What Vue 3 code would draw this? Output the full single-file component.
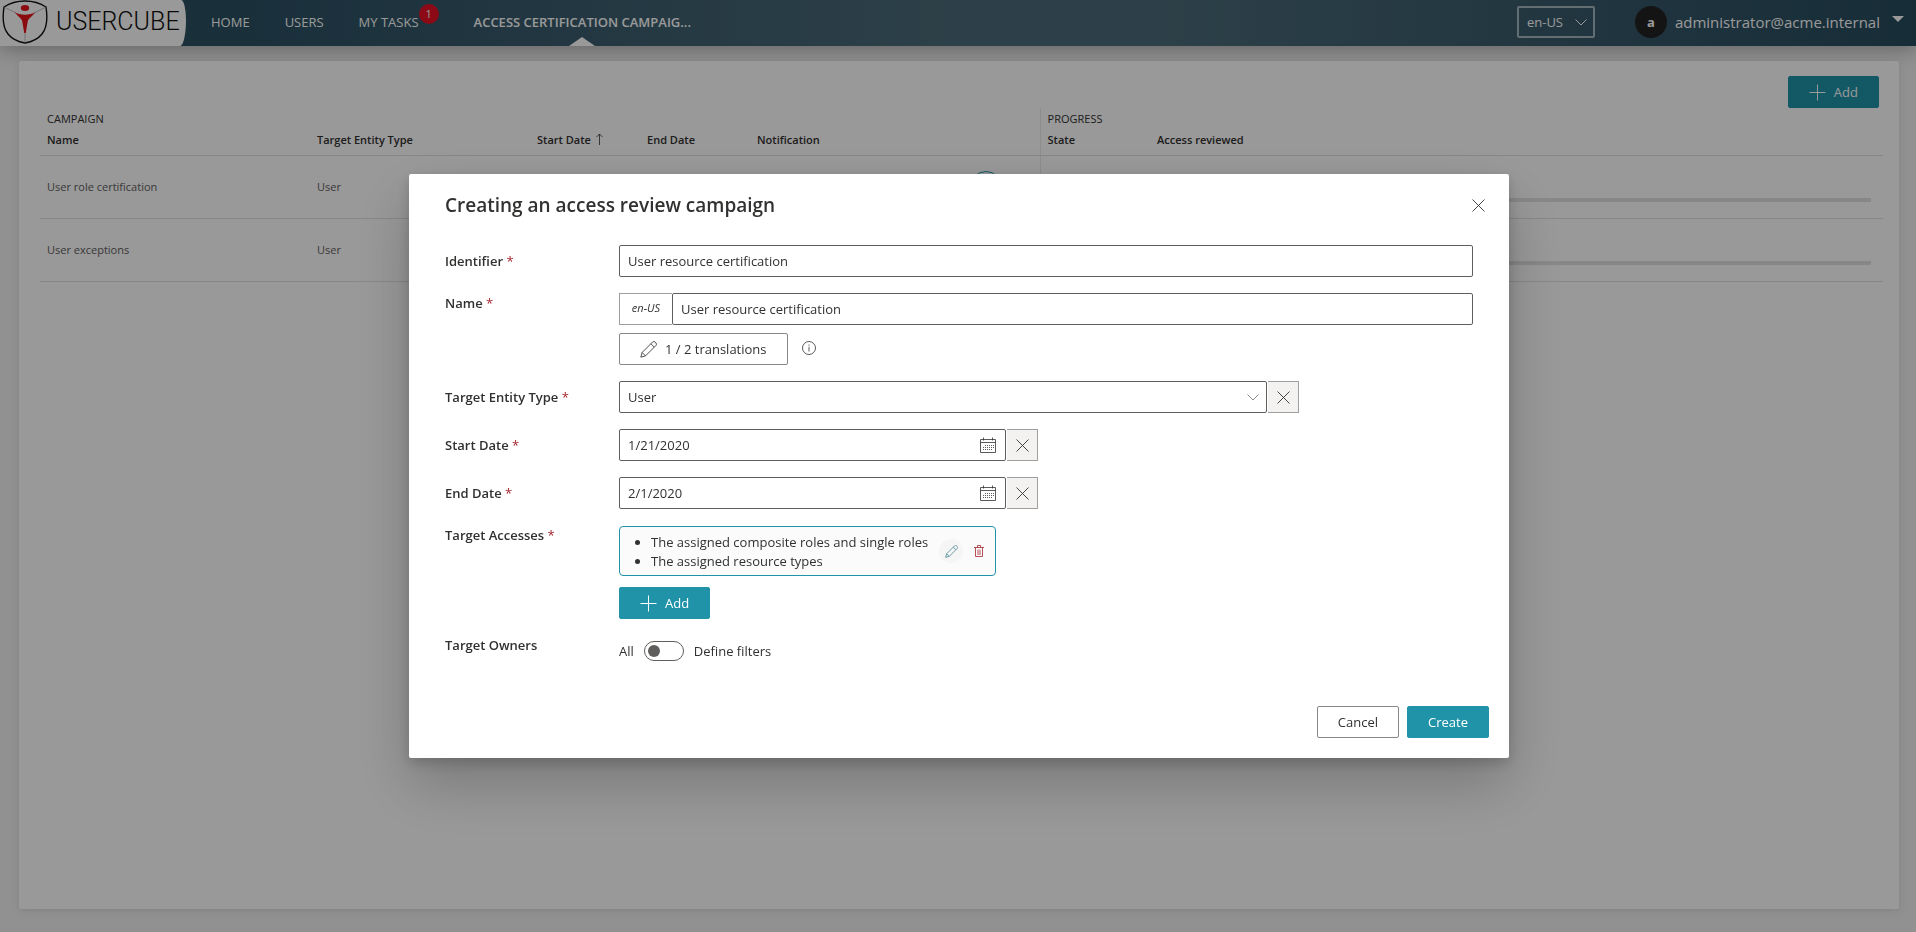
<template>
  <div class="page">
    <header class="topbar">
      <a href="#" class="logo">
        <svg width="46" height="44" viewBox="0 0 46 44">
          <path
            d="M23 1C16 1 8 3 2 7C0 20 2 29 6 34C10 39 17 42 23 43C29 42 36 39 40 34C44 29 46 20 44 7C38 3 30 1 23 1Z"
            stroke="#111"
            stroke-width="1.400"
          />
          <path d="M23 20V43M14 13L2 7M32 13L44 7" stroke="#999" stroke-width=".6" />
          <ellipse cx="23" cy="8" rx="4.200" ry="3" fill="#e8121c" stroke="none" />
          <path
            d="M12.500 12C18 15.500 28 15.500 33.500 12C30 16.500 26.500 18.500 25.800 21L23.800 33H22.200L20.200 21C19.500 18.500 16 16.500 12.500 12Z"
            fill="#e8121c"
            stroke="none"
          />
        </svg>
        <span>USERCUBE</span>
      </a>
      <nav class="nav">
        <a
          v-for="item in navItems"
          :key="item.label"
          href="#"
          :class="{ active: item.active }"
        >
          {{ item.label }}
          <span v-if="item.count" class="count">{{ item.count }}</span>
        </a>
      </nav>
      <div class="lang">
        <select v-model="lang" aria-label="Language">
          <option>en-US</option>
          <option>fr-FR</option>
        </select>
        <svg class="chevron" width="12" height="7" viewBox="0 0 12 7">
          <path d="M.5 .5L6 6L11.500 .5" />
        </svg>
      </div>
      <button type="button" class="account">
        <span class="avatar">a</span>
        <span>administrator@acme.internal</span>
        <span class="caret"></span>
      </button>
    </header>

    <main class="card">
      <div class="toolbar">
        <button type="button" class="btn primary">
          <svg width="17" height="17" viewBox="0 0 17 17">
            <path d="M8.500 .5V16.500M.5 8.500H16.500" />
          </svg>
          Add
        </button>
      </div>
      <table class="grid">
        <colgroup>
          <col class="col-name" />
          <col class="col-type" />
          <col class="col-short" />
          <col class="col-short" />
          <col class="col-notif" />
          <col class="col-short" />
          <col />
        </colgroup>
        <thead>
          <tr class="groups">
            <th colspan="5">CAMPAIGN</th>
            <th colspan="2" class="split">PROGRESS</th>
          </tr>
          <tr class="heads">
            <th>Name</th>
            <th>Target Entity Type</th>
            <th>
              Start Date
              <svg class="sort" width="7" height="12" viewBox="0 0 7 12">
                <path d="M3.500 12V1M.5 4L3.500 1L6.500 4" />
              </svg>
            </th>
            <th>End Date</th>
            <th>Notification</th>
            <th class="split">State</th>
            <th>Access reviewed</th>
          </tr>
        </thead>
        <tbody>
          <tr v-for="row in campaigns" :key="row.name">
            <td>{{ row.name }}</td>
            <td>{{ row.type }}</td>
            <td></td>
            <td></td>
            <td class="notif">
              <button v-if="row.notify" type="button" class="round" aria-label="Notify"></button>
            </td>
            <td class="split"></td>
            <td class="reviewed"><div class="bar"></div></td>
          </tr>
        </tbody>
      </table>
    </main>

    <div class="overlay">
      <form class="modal" role="dialog" aria-labelledby="modal-title" @submit.prevent>
        <div class="modal-head">
          <h2 id="modal-title">Creating an access review campaign</h2>
          <button type="button" class="close" aria-label="Close">
            <svg width="13" height="13" viewBox="0 0 13 13">
              <path d="M.5 .5L12.500 12.500M12.500 .5L.5 12.500" />
            </svg>
          </button>
        </div>

        <div class="fields">
          <div class="row">
            <label for="identifier">Identifier <span class="star">*</span></label>
            <input id="identifier" v-model="form.identifier" class="box" type="text" />
          </div>

          <div class="row top">
            <label for="name">Name <span class="star">*</span></label>
            <div class="stack">
              <div class="group">
                <span class="locale">en-US</span>
                <input id="name" v-model="form.name" class="box" type="text" />
              </div>
              <div class="group">
                <button type="button" class="btn">
                  <svg class="thin" width="17" height="17" viewBox="0 0 16 16">
                    <path
                      d="M.8 15.200L2 10.800L11.800 1A1.700 1.700 0 0 1 14.200 1L15 1.800A1.700 1.700 0 0 1 15 4.200L5.200 14ZM2 10.800L5.200 14M10.200 2.600L13.400 5.800"
                    />
                  </svg>
                  1 / 2 translations
                </button>
                <svg class="info thin" width="14" height="14" viewBox="0 0 14 14">
                  <circle cx="7" cy="7" r="6.500" />
                  <path d="M7 5.800V10.500M7 3.500V4.700" />
                </svg>
              </div>
            </div>
          </div>

          <div class="row">
            <label for="entity-type">Target Entity Type <span class="star">*</span></label>
            <div class="group">
              <div class="select">
                <select id="entity-type" v-model="form.entityType" class="box">
                  <option>User</option>
                </select>
                <svg class="chevron" width="12" height="7" viewBox="0 0 12 7">
                  <path d="M.5 .5L6 6L11.500 .5" />
                </svg>
              </div>
              <button type="button" class="clear" aria-label="Clear">
                <svg width="13" height="13" viewBox="0 0 13 13">
                  <path d="M.5 .5L12.500 12.500M12.500 .5L.5 12.500" />
                </svg>
              </button>
            </div>
          </div>

          <div v-for="date in dates" :key="date.id" class="row">
            <label :for="date.id">{{ date.label }} <span class="star">*</span></label>
            <div class="group">
              <div class="date">
                <input :id="date.id" v-model="date.value" class="box" type="text" />
                <button type="button" class="calendar" aria-label="Open calendar">
                  <svg class="thin" width="16" height="16" viewBox="0 0 16 16">
                    <path d="M.5 2.500H15.500V15.500H.5ZM.5 5.500H15.500M3.500 .5V3.500M12.500 .5V3.500" />
                    <path class="dots" d="M5 8.500H14M3 10.500H14M3 12.500H12" />
                  </svg>
                </button>
              </div>
              <button type="button" class="clear" aria-label="Clear">
                <svg width="13" height="13" viewBox="0 0 13 13">
                  <path d="M.5 .5L12.500 12.500M12.500 .5L.5 12.500" />
                </svg>
              </button>
            </div>
          </div>

          <div class="row top">
            <span class="label">Target Accesses <span class="star">*</span></span>
            <div class="accesses">
              <div class="access">
                <ul>
                  <li v-for="access in accesses" :key="access">{{ access }}</li>
                </ul>
                <button type="button" class="icon-btn edit" aria-label="Edit">
                  <svg width="13" height="13" viewBox="0 0 16 16">
                    <path
                      d="M.8 15.200L2 10.800L11.800 1A1.700 1.700 0 0 1 14.200 1L15 1.800A1.700 1.700 0 0 1 15 4.200L5.200 14ZM2 10.800L5.200 14M10.200 2.600L13.400 5.800"
                    />
                  </svg>
                </button>
                <button type="button" class="icon-btn trash" aria-label="Delete">
                  <svg class="thin" width="10" height="12" viewBox="0 0 10 12">
                    <path d="M0 2.500H10M3.500 2.500V.5H6.500V2.500M1.500 2.500V11.500H8.500V2.500M4 4.500V10M6 4.500V10" />
                  </svg>
                </button>
              </div>
              <button type="button" class="btn primary">
                <svg width="17" height="17" viewBox="0 0 17 17">
                  <path d="M8.500 .5V16.500M.5 8.500H16.500" />
                </svg>
                Add
              </button>
            </div>
          </div>

          <div class="row top">
            <label for="owners">Target Owners</label>
            <div class="group owners">
              <span>All</span>
              <input id="owners" v-model="form.filterOwners" class="toggle" type="checkbox" />
              <span>Define filters</span>
            </div>
          </div>
        </div>

        <div class="modal-foot">
          <button type="button" class="btn">Cancel</button>
          <button type="submit" class="btn primary">Create</button>
        </div>
      </form>
    </div>
  </div>
</template>

<script setup>
import { ref, reactive } from "vue";

const lang = ref("en-US");

const navItems = [
  { label: "HOME" },
  { label: "USERS" },
  { label: "MY TASKS", count: 1 },
  { label: "ACCESS CERTIFICATION CAMPAIG...", active: true },
];

const campaigns = [
  { name: "User role certification", type: "User", notify: true },
  { name: "User exceptions", type: "User", notify: false },
];

const form = reactive({
  identifier: "User resource certification",
  name: "User resource certification",
  entityType: "User",
  filterOwners: false,
});

const dates = reactive([
  { id: "start-date", label: "Start Date", value: "1/21/2020" },
  { id: "end-date", label: "End Date", value: "2/1/2020" },
]);

const accesses = [
  "The assigned composite roles and single roles",
  "The assigned resource types",
];
</script>

<style>
body {
  margin: 0;
}
</style>

<style scoped>
.page,
.page * {
  box-sizing: border-box;
}

.page {
  min-height: 100vh;
  display: flex;
  flex-direction: column;
  background: #f2f2f2;
  color: #323130;
  font-family: "Open Sans", "Noto Sans", sans-serif;
  font-size: 13px;
  line-height: 20px;
}

button,
input,
select {
  font: inherit;
  color: inherit;
}

button {
  padding: 0;
  border: 0;
  background: none;
}

svg {
  flex: none;
  fill: none;
  stroke: currentColor;
}

.thin {
  stroke-width: 0.8;
}

.topbar {
  display: flex;
  align-items: center;
  height: 46px;
  padding: 0 12px 2px 0;
  background: linear-gradient(90deg, #2a4f62 12%, #4c6c7a 50%, #4c6c7a 60%, #264b5d 100%);
  box-shadow: 0 4px 20px rgba(0, 0, 0, 0.3);
  color: #fff;
}

.topbar a {
  color: #fff;
  text-decoration: none;
}

.topbar .logo {
  display: flex;
  align-items: center;
  align-self: flex-start;
  gap: 8px;
  width: 186px;
  height: 46px;
  padding: 0 0 2px 2px;
  background: #fff;
  border-radius: 0 5px 6px 0 / 0 20px 26px 0;
  color: #111;
  font-family: Roboto, sans-serif;
  font-size: 25px;
  font-weight: 300;
}

.nav {
  display: flex;
  flex: 1;
  align-self: flex-start;
  gap: 35px;
  padding-left: 25px;
}

.nav a {
  position: relative;
  height: 46px;
  line-height: 44px;
}

.nav .active {
  margin-left: 20px;
  font-weight: 600;
}

.nav .active::after {
  content: "";
  position: absolute;
  left: 50%;
  bottom: 0;
  margin-left: -13px;
  border: 13px solid transparent;
  border-top: 0;
  border-bottom: 9px solid #fff;
}

.count {
  position: absolute;
  top: 4px;
  right: -20px;
  width: 20px;
  border-radius: 50%;
  background: #e81123;
  font-size: 11px;
  line-height: 20px;
  text-align: center;
}

.lang {
  position: relative;
  margin-right: 40px;
}

.lang select {
  display: block;
  width: 78px;
  height: 32px;
  padding: 0 8px;
  border: 2px solid #a6b7be;
  border-radius: 2px;
  background: transparent;
  appearance: none;
}

.chevron {
  position: absolute;
  top: 13px;
  right: 8px;
  pointer-events: none;
}

.account {
  display: flex;
  align-items: center;
  gap: 8px;
  font-size: 15px;
}

.avatar {
  width: 32px;
  border-radius: 50%;
  background: #222;
  font-size: 13px;
  font-weight: 700;
  line-height: 32px;
}

.caret {
  margin: 0 0 6px 4px;
  border: 6px solid transparent;
  border-top-color: #fff;
  border-bottom: 0;
}

.card {
  flex: 1;
  margin: 15px 17px 23px 19px;
  padding: 15px 16px 15px 21px;
  border-radius: 2px;
  background: #fff;
  box-shadow: 0 2px 10px rgba(0, 0, 0, 0.1);
}

.toolbar {
  display: flex;
  justify-content: flex-end;
  padding-right: 4px;
}

.btn {
  display: inline-flex;
  align-items: center;
  gap: 8px;
  height: 32px;
  padding: 0 20px;
  border: 1px solid #8a8886;
  border-radius: 2px;
  background: #fff;
}

.btn.primary {
  border-color: #2093a9;
  background: #2093a9;
  color: #fff;
}

.grid {
  width: 100%;
  border-collapse: collapse;
  table-layout: fixed;
  font-size: 11px;
}

.col-name {
  width: 270px;
}

.col-type {
  width: 220px;
}

.col-short {
  width: 110px;
}

.col-notif {
  width: 290px;
}

.grid th,
.grid td {
  padding: 0 7px;
  text-align: left;
  font-weight: 400;
}

.grid .split {
  border-left: 1px solid #edebe9;
}

.groups th {
  height: 21px;
  line-height: 20px;
}

.heads th {
  height: 26px;
  border-bottom: 1px solid #e1dfdd;
}

.grid .heads th {
  padding-bottom: 4px;
  font-weight: 600;
}

.sort {
  margin-left: 2px;
  stroke-width: 0.8;
  vertical-align: -1px;
}

.grid td {
  height: 63px;
  border-bottom: 1px solid #e4e2e0;
  color: #605e5c;
}

.grid .notif {
  padding-right: 38px;
  text-align: right;
}

.round {
  display: inline-block;
  width: 32px;
  height: 32px;
  border: 1px solid #2093a9;
  border-radius: 50%;
  vertical-align: middle;
}

.grid .reviewed {
  padding: 27px 12px 0 7px;
}

.bar {
  height: 4px;
  background: #e4e2e0;
}

.overlay {
  position: fixed;
  inset: 0;
  display: flex;
  align-items: center;
  justify-content: center;
  padding-left: 2px;
  background: rgba(0, 0, 0, 0.4);
}

.modal {
  width: 1100px;
  max-width: 100%;
  padding: 20px;
  border-radius: 2px;
  background: #fff;
  box-shadow: 0 26px 58px rgba(0, 0, 0, 0.22), 0 5px 14px rgba(0, 0, 0, 0.18);
}

.modal-head {
  display: flex;
  align-items: center;
  justify-content: space-between;
  height: 22px;
  padding: 0 4px 0 16px;
}

h2 {
  margin: 0;
  font-size: 19px;
  font-weight: 600;
}

.close {
  display: flex;
}

.fields {
  display: flex;
  flex-direction: column;
  gap: 16px;
  padding: 29px 16px 39px;
}

.row {
  display: flex;
  align-items: center;
}

.row.top {
  align-items: flex-start;
}

.row > label,
.label {
  flex: none;
  width: 174px;
  font-weight: 600;
}

.star {
  color: #a4262c;
  font-weight: 400;
}

.box {
  display: block;
  width: 100%;
  height: 32px;
  padding: 0 8px;
  border: 1px solid #605e5c;
  border-radius: 2px;
  background: #fff;
  appearance: none;
}

.stack {
  display: flex;
  flex: 1;
  flex-direction: column;
  gap: 8px;
}

.group {
  display: flex;
}

.locale {
  flex: none;
  width: 53px;
  border: 1px solid #a19f9d;
  border-right: 0;
  font-size: 11px;
  font-style: italic;
  line-height: 28px;
  text-align: center;
}

.info {
  margin: 8px 0 0 14px;
}

.select {
  position: relative;
  width: 648px;
}

.select .chevron {
  color: #8a8886;
}

.date {
  position: relative;
  width: 387px;
}

.calendar {
  position: absolute;
  top: 8px;
  right: 10px;
  display: flex;
}

.dots {
  stroke-dasharray: 1 1;
}

.clear {
  display: flex;
  align-items: center;
  justify-content: center;
  width: 31px;
  margin-left: 1px;
  border: 1px solid #a19f9d;
  border-left: 0;
  background: #f3f2f1;
}

.clear svg,
.close svg {
  stroke-width: 0.9;
}

.accesses {
  padding-top: 1px;
}

.access {
  display: flex;
  align-items: center;
  width: 377px;
  height: 50px;
  margin-bottom: 11px;
  padding: 0 4px 0 5px;
  border: 1px solid #2093a9;
  border-radius: 4px;
  background: #fbfbfc;
}

.access ul {
  flex: 1;
  margin: 0;
  padding: 1px 0 0 26px;
  line-height: 19px;
  white-space: nowrap;
}

.icon-btn {
  display: flex;
  align-items: center;
  justify-content: center;
  width: 24px;
  height: 24px;
  border-radius: 50%;
}

.edit {
  margin-right: 4px;
  background: #f5f5f5;
  color: #4a8794;
}

.trash {
  color: #a4262c;
}

.owners {
  align-items: center;
  gap: 10px;
  height: 32px;
}

.toggle {
  display: flex;
  align-items: center;
  width: 40px;
  height: 20px;
  margin: 0;
  padding: 0 3px;
  border: 1px solid #605e5c;
  border-radius: 10px;
  appearance: none;
}

.toggle::before {
  content: "";
  width: 12px;
  height: 12px;
  border-radius: 50%;
  background: #605e5c;
}

.toggle:checked {
  justify-content: flex-end;
}

.modal-foot {
  display: flex;
  justify-content: flex-end;
  gap: 8px;
}
</style>
